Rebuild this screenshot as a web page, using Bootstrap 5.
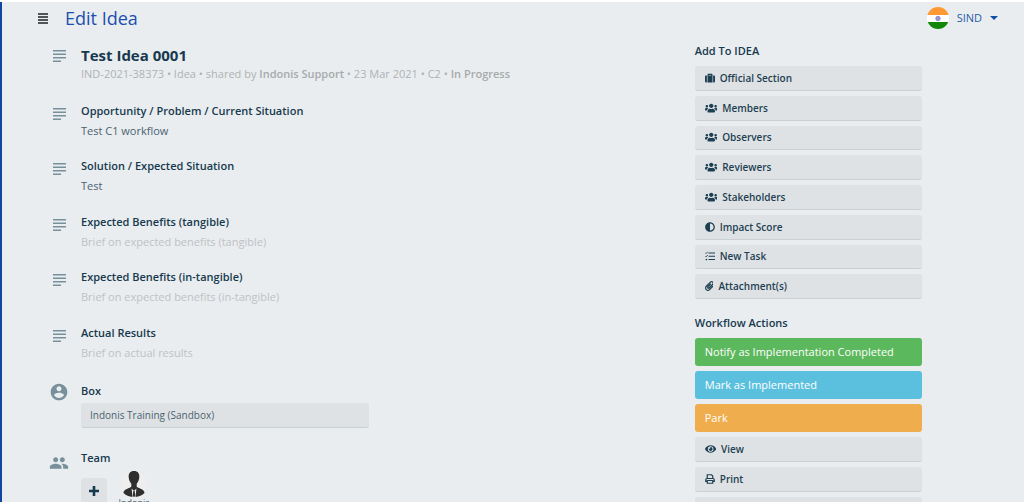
<!DOCTYPE html>
<html lang="en">
<head>
<meta charset="utf-8">
<meta name="viewport" content="width=device-width, initial-scale=1">
<title>Edit Idea</title>
<link href="https://cdn.jsdelivr.net/npm/bootstrap@5.3.0/dist/css/bootstrap.min.css" rel="stylesheet">
<style>
  body { font-family: "Open Sans", "Noto Sans", sans-serif; font-size: 11px; line-height: 16px; color: #1d3f52; background: #e9edf0; }
  .app-shell { border-top: 2px solid #fff; position: relative; }
  .app-shell::before { content: ""; position: absolute; inset: 0 auto 0 0; width: 2px; background: #0d47a1; }
  .topbar { height: 32px; padding-left: 37px; padding-right: 26px; }
  .menu-btn { width: 12px; height: 12px; color: #222; }
  .page-title { font-size: 18px; line-height: 24px; font-weight: 400; color: #1c4fae; margin-left: 16px; }
  .account { color: #2a5ba8; gap: 8px; }
  .account::after { margin: 0; border-width: 4px 4px 0; color: #0d4fa8; }
  .page-body { padding: 8px 10% 0 49px; }
  .side { flex: 0 0 26%; }
  .glyph { width: 20px; margin-right: 12px; color: #78909c; }
  .idea-title { font-size: 15px; line-height: 20px; font-weight: 700; color: #17394d; margin-top: 3px; }
  .meta { color: #b0b2b3; line-height: 18px; }
  .meta b { color: #a7aaab; font-weight: 600; }
  .field-list { display: grid; grid-auto-rows: 1fr; min-height: 277px; margin-top: 19px; }
  .label { font-size: 11px; line-height: 18px; font-weight: 700; color: #17394d; }
  .label, .side-title, .tool { font-weight: 600; -webkit-text-stroke: 0; }
  .value { color: #4a6270; line-height: 18px; margin-top: 2px; }
  .value.hint { color: #bfc2c4; }
  .glyph-line { padding-top: 6px; }
  .box-select { width: 288px; height: 25px; padding: 0 9px; font-size: 10px; color: #4a6270; background: #dfe2e4; border: 0; border-bottom: 1px solid #c8d0d3; border-radius: 3px; appearance: none; }
  .box-row { margin-top: 3px; }
  .box-row .label { margin-bottom: 3px; }
  .team-row { margin-top: 21px; }
  .add-btn { width: 26px; height: 26px; background: #dfe2e4; border-radius: 3px; margin-top: 11px; color: #17394d; }
  .member { margin-left: 10px; margin-top: 2px; width: 34px; font-size: 9px; line-height: 12px; color: #4a6270; }
  .side-title { font-size: 11px; line-height: 18px; color: #17394d; margin-bottom: 6px; }
  .tool-list { display: grid; gap: 5px; grid-auto-rows: 1fr; min-height: 233px; }
  .tool { display: flex; align-items: center; gap: 5px; width: 100%; height: 100%; min-height: 24px; padding: 0 10px; border: 0; border-bottom: 1px solid #c9cfd2; border-radius: 3px; background: #dfe2e4; color: #1d3f52; font-size: 10px; text-align: left; }
  .tool svg { height: 10px; fill: currentColor; flex: none; }
  .flow-title { margin-top: 15px; }
  .flow-list { display: grid; gap: 5px; }
  .flow-list .tool { min-height: 25px; }
  .flow { padding: 5px 10px; border: 0; border-radius: 3px; color: #fff; font-size: 11px; line-height: 18px; text-align: left; }
  .flow-done { background: #5cb85c; }
  .flow-mark { background: #5bc0de; }
  .flow-park { background: #f0ad4e; }
</style>
</head>
<body>
<svg class="d-none" aria-hidden="true">
  <symbol id="i-lines" viewBox="0 0 13 12"><path d="M0 .8h13M0 4.300h13M0 7.700h13M0 11.200h8" stroke="currentColor" stroke-width="1.600"/></symbol>
  <symbol id="i-users" viewBox="0 0 640 512"><path d="M96 224c35.300 0 64-28.700 64-64s-28.700-64-64-64-64 28.700-64 64 28.700 64 64 64zm448 0c35.300 0 64-28.700 64-64s-28.700-64-64-64-64 28.700-64 64 28.700 64 64 64zm32 32h-64c-17.600 0-33.500 7.100-45.100 18.600 40.300 22.100 68.900 62 75.100 109.400h66c17.700 0 32-14.300 32-32v-32c0-35.300-28.700-64-64-64zm-256 0c61.900 0 112-50.100 112-112S381.900 32 320 32 208 82.100 208 144s50.100 112 112 112zm76.800 32h-8.300c-20.800 10-43.900 16-68.500 16s-47.600-6-68.500-16h-8.300C179.600 288 128 339.600 128 403.200V432c0 26.500 21.500 48 48 48h288c26.500 0 48-21.500 48-48v-28.800c0-63.600-51.600-115.200-115.200-115.200zm-223.700-13.400C161.500 263.100 145.600 256 128 256H64c-35.300 0-64 28.700-64 64v32c0 17.700 14.300 32 32 32h65.900c6.300-47.400 34.900-87.300 75.200-109.400z"/></symbol>
</svg>

<div class="app-shell vh-100 overflow-hidden">
  <header class="topbar d-flex align-items-center justify-content-between">
    <div class="d-flex align-items-center">
      <button type="button" class="menu-btn btn p-0 border-0 d-flex" aria-label="Menu">
        <svg width="12" height="12" viewBox="0 0 12 12"><path d="M1 2h10M1 5h10M1 8h10M1 11h10" stroke="currentColor" stroke-width="1.500"/></svg>
      </button>
      <h1 class="page-title mb-0">Edit Idea</h1>
    </div>
    <a href="#" class="account dropdown-toggle d-flex align-items-center text-decoration-none" role="button">
      <svg width="22" height="22" viewBox="0 0 22 22" aria-hidden="true">
        <clipPath id="disc"><circle cx="11" cy="11" r="11"/></clipPath>
        <g clip-path="url(#disc)"><path fill="#ff9933" d="M0 0h22v8H0z"/><path fill="#fff" d="M0 8h22v7H0z"/><path fill="#138808" d="M0 15h22v7H0z"/></g>
        <circle cx="11" cy="11.500" r="2.200" fill="#9a9ad0" stroke="#7d7dc4" stroke-width=".8"/>
      </svg>
      <span>SIND</span>
    </a>
  </header>

  <div class="page-body d-flex justify-content-between">
    <main>
      <section class="d-flex">
        <span class="glyph pt-2"><svg width="15" height="12" class="d-block mx-auto"><use href="#i-lines"/></svg></span>
        <div>
          <h2 class="idea-title mb-0">Test Idea 0001</h2>
          <div class="meta">IND-2021-38373 • Idea • shared by <b>Indonis Support</b> • 23 Mar 2021 • C2 • <b>In Progress</b></div>
        </div>
      </section>

      <div class="field-list">
        <section class="d-flex">
          <span class="glyph glyph-line"><svg width="15" height="12" class="d-block mx-auto"><use href="#i-lines"/></svg></span>
          <div><h3 class="label mb-0">Opportunity / Problem / Current Situation</h3><div class="value">Test C1 workflow</div></div>
        </section>
        <section class="d-flex">
          <span class="glyph glyph-line"><svg width="15" height="12" class="d-block mx-auto"><use href="#i-lines"/></svg></span>
          <div><h3 class="label mb-0">Solution / Expected Situation</h3><div class="value">Test</div></div>
        </section>
        <section class="d-flex">
          <span class="glyph glyph-line"><svg width="15" height="12" class="d-block mx-auto"><use href="#i-lines"/></svg></span>
          <div><h3 class="label mb-0">Expected Benefits (tangible)</h3><div class="value hint">Brief on expected benefits (tangible)</div></div>
        </section>
        <section class="d-flex">
          <span class="glyph glyph-line"><svg width="15" height="12" class="d-block mx-auto"><use href="#i-lines"/></svg></span>
          <div><h3 class="label mb-0">Expected Benefits (in-tangible)</h3><div class="value hint">Brief on expected benefits (in-tangible)</div></div>
        </section>
        <section class="d-flex">
          <span class="glyph glyph-line"><svg width="15" height="12" class="d-block mx-auto"><use href="#i-lines"/></svg></span>
          <div><h3 class="label mb-0">Actual Results</h3><div class="value hint">Brief on actual results</div></div>
        </section>
      </div>

      <section class="box-row d-flex">
        <span class="glyph"><svg width="20" height="20" viewBox="0 0 24 24" fill="currentColor" class="d-block"><path d="M12 2C6.480 2 2 6.480 2 12s4.480 10 10 10 10-4.480 10-10S17.520 2 12 2zm0 3c1.660 0 3 1.340 3 3s-1.340 3-3 3-3-1.340-3-3 1.340-3 3-3zm0 14.200c-2.500 0-4.710-1.280-6-3.220.03-1.990 4-3.080 6-3.080 1.990 0 5.970 1.090 6 3.080-1.290 1.940-3.500 3.220-6 3.220z"/></svg></span>
        <div>
          <label class="label d-block" for="box">Box</label>
          <select id="box" class="box-select d-block"><option>Indonis Training (Sandbox)</option></select>
        </div>
      </section>

      <section class="team-row d-flex">
        <span class="glyph pt-1"><svg width="20" height="20" viewBox="1 0 22 24" fill="currentColor" class="d-block"><path d="M16 13c-.29 0-.62.02-.97.05 1.160.84 1.970 1.970 1.970 3.450V19h6v-2.500c0-2.330-4.670-3.500-7-3.500zm0-2c1.660 0 2.990-1.340 2.990-3S17.660 5 16 5s-3 1.340-3 3 1.340 3 3 3zm-8 0c1.660 0 2.990-1.340 2.990-3S9.660 5 8 5 5 6.340 5 8s1.340 3 3 3zm0 2c-2.330 0-7 1.170-7 3.500V19h14v-2.500c0-2.330-4.670-3.500-7-3.500z"/></svg></span>
        <div>
          <h3 class="label mb-0">Team</h3>
          <div class="d-flex align-items-start">
            <button type="button" class="add-btn btn p-0 border-0 d-flex align-items-center justify-content-center" aria-label="Add member">
              <svg width="10" height="10" viewBox="0 0 10 10"><path d="M5 0v10M0 5h10" stroke="currentColor" stroke-width="2.600"/></svg>
            </button>
            <div class="member d-flex flex-column align-items-center">
              <svg width="26" height="28" viewBox="0 0 26 28" aria-hidden="true"><circle cx="13" cy="15" r="13" fill="#eeeeee"/><path fill="#2e2e2e" d="M13 2c4 0 5.600 2.600 5.300 6.200-.2 3-1.300 5-2.600 6.600v3c1.200 1.800 7.800 1.800 7.800 6.200C21 26.600 17 28 13 28S5 26.600 2.500 24c0-4.400 6.600-4.400 7.800-6.200v-3C9 13.200 7.900 11.200 7.700 8.200 7.400 4.600 9 2 13 2z"/><path fill="#eee" d="M10.600 19.500 13 22l2.400-2.500L14.500 28h-3z"/><path fill="#2e2e2e" d="m12.300 22h1.400l.6 5-1.300 1-1.300-1z"/></svg>
              <span>Indonis</span>
            </div>
          </div>
        </div>
      </section>
    </main>

    <aside class="side">
      <h3 class="side-title">Add To IDEA</h3>
      <div class="tool-list">
        <button type="button" class="tool"><svg viewBox="0 0 512 512"><path d="M128 480h256V80c0-26.500-21.500-48-48-48H176c-26.500 0-48 21.500-48 48v400zm64-384h128v32H192V96zm320 80v256c0 26.500-21.500 48-48 48h-48V128h48c26.500 0 48 21.500 48 48zM96 480H48c-26.500 0-48-21.500-48-48V176c0-26.500 21.500-48 48-48h48v352z"/></svg>Official Section</button>
        <button type="button" class="tool"><svg viewBox="0 0 640 512"><use href="#i-users"/></svg>Members</button>
        <button type="button" class="tool"><svg viewBox="0 0 640 512"><use href="#i-users"/></svg>Observers</button>
        <button type="button" class="tool"><svg viewBox="0 0 640 512"><use href="#i-users"/></svg>Reviewers</button>
        <button type="button" class="tool"><svg viewBox="0 0 640 512"><use href="#i-users"/></svg>Stakeholders</button>
        <button type="button" class="tool"><svg viewBox="0 0 512 512"><path d="M8 256c0 137 111 248 248 248s248-111 248-248S393 8 256 8 8 119 8 256zm248 184V72c101.700 0 184 82.300 184 184 0 101.700-82.300 184-184 184z"/></svg>Impact Score</button>
        <button type="button" class="tool"><svg viewBox="0 0 20 20"><path d="M7 4h13M7 10.500h13M7 17h13" stroke="currentColor" stroke-width="2.400"/><path d="m.5 3.500 1.700 1.700L5.500 1.500M.5 10l1.700 1.700L5.500 8" fill="none" stroke="currentColor" stroke-width="1.700"/><circle cx="2.800" cy="17" r="1.700"/></svg>New Task</button>
        <button type="button" class="tool"><svg viewBox="0 0 448 512"><path d="M43.246 466.142c-58.430-60.289-57.341-157.511 1.386-217.581L254.392 34c44.316-45.332 116.351-45.336 160.671 0 43.890 44.894 43.943 117.329 0 162.276L232.214 383.128c-29.855 30.537-78.633 30.111-107.982-.998-28.275-29.970-27.368-77.473 1.452-106.953l143.743-146.835c6.182-6.314 16.312-6.422 22.626-.241l22.861 22.379c6.315 6.182 6.422 16.312.241 22.626L171.427 319.927c-4.932 5.045-5.236 13.428-.648 18.292 4.372 4.634 11.245 4.711 15.688.165l182.849-186.851c19.613-20.062 19.613-52.725-.011-72.798-19.189-19.627-49.957-19.637-69.154 0L90.390 293.295c-34.763 35.560-35.299 93.120-1.191 128.313 34.010 35.093 88.985 35.137 123.058.286l172.060-175.999c6.177-6.319 16.307-6.433 22.626-.256l22.877 22.364c6.319 6.177 6.434 16.307.256 22.626l-172.060 175.998c-59.576 60.938-155.943 60.216-214.770-.485z"/></svg>Attachment(s)</button>
      </div>

      <h3 class="side-title flow-title">Workflow Actions</h3>
      <div class="flow-list">
        <button type="button" class="flow flow-done">Notify as Implementation Completed</button>
        <button type="button" class="flow flow-mark">Mark as Implemented</button>
        <button type="button" class="flow flow-park">Park</button>
        <button type="button" class="tool"><svg viewBox="0 0 576 512"><path d="M572.520 241.400C518.290 135.590 410.930 64 288 64S57.680 135.640 3.480 241.410a32.350 32.350 0 0 0 0 29.190C57.710 376.410 165.070 448 288 448s230.320-71.640 284.520-177.410a32.350 32.350 0 0 0 0-29.190zM288 400a144 144 0 1 1 144-144 143.930 143.930 0 0 1-144 144zm0-240a95.310 95.310 0 0 0-25.310 3.790 47.850 47.850 0 0 1-66.900 66.900A95.780 95.780 0 1 0 288 160z"/></svg>View</button>
        <button type="button" class="tool"><svg viewBox="0 0 20 20"><path d="M4.500 9V1.500H13L15.500 4v5M4.500 15H1.500v-3.500q0-2.500 2.500-2.500h12q2.500 0 2.500 2.500V15h-3M4.500 13h11v5.500h-11z" fill="none" stroke="currentColor" stroke-width="2.400"/></svg>Print</button>
        <button type="button" class="tool" aria-label="More"></button>
      </div>
    </aside>
  </div>
</div>
<script src="https://cdn.jsdelivr.net/npm/bootstrap@5.3.0/dist/js/bootstrap.bundle.min.js"></script>
</body>
</html>
